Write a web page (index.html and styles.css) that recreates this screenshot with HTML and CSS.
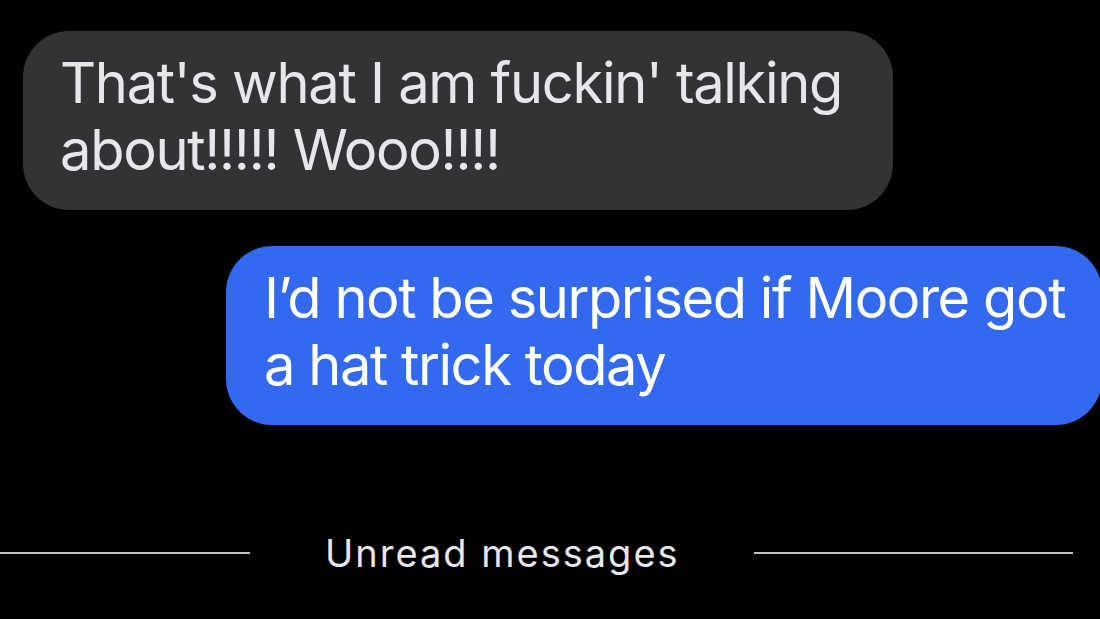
FILE: index.html
```html
<!DOCTYPE html>
<html lang="en">

<head>
    <meta charset="UTF-8">
    <meta name="viewport" content="width=device-width, initial-scale=1.0">
    <title>Messages</title>
    <link rel="stylesheet" href="styles.css">
</head>

<body>
    <div class="thread">
        <div class="bubble received">
            That's what I am fuckin' talking<br>about!!!!! Wooo!!!!
        </div>
        <div class="bubble sent">
            I’d not be surprised if Moore got<br>a hat trick today
        </div>
        <div class="unread">
            <span class="rule rule-left"></span>
            <span class="unread-label">Unread messages</span>
            <span class="rule rule-right"></span>
        </div>
    </div>
</body>

</html>
```

FILE: styles.css
```css
body {
    font-family: Inter, "Noto Sans", "Liberation Sans", sans-serif;
    background-color: #000;
    margin: 0;
    overflow: hidden;
}

.thread {
    display: flex;
    flex-direction: column;
    padding-top: 31px;
    height: 619px;
    box-sizing: border-box;
}

.bubble {
    font-size: 56px;
    line-height: 67px;
    letter-spacing: -1.3px;
    white-space: nowrap;
    padding: 19px 36px 26px 37px;
    border-radius: 46px;
    box-sizing: border-box;
    height: 179px;
}

.received {
    align-self: flex-start;
    margin-left: 23px;
    width: 870px;
    background-color: #333335;
    color: #e6e6eb;
}

.sent {
    align-self: flex-end;
    margin-top: 36px;
    margin-right: -2px;
    width: 876px;
    padding-left: 38px;
    letter-spacing: -1.45px;
    background-color: #3369ef;
    color: #fff;
}

.unread {
    display: flex;
    align-items: center;
    margin-top: 105px;
    padding-right: 27px;
}

.rule {
    height: 2px;
    background-color: #c4c4c8;
}

.rule-left {
    width: 250px;
}

.rule-right {
    flex: 1;
}

.unread-label {
    margin: 0 74px 0 75px;
    font-size: 38px;
    letter-spacing: 2px;
    color: #e6e6eb;
}
```
